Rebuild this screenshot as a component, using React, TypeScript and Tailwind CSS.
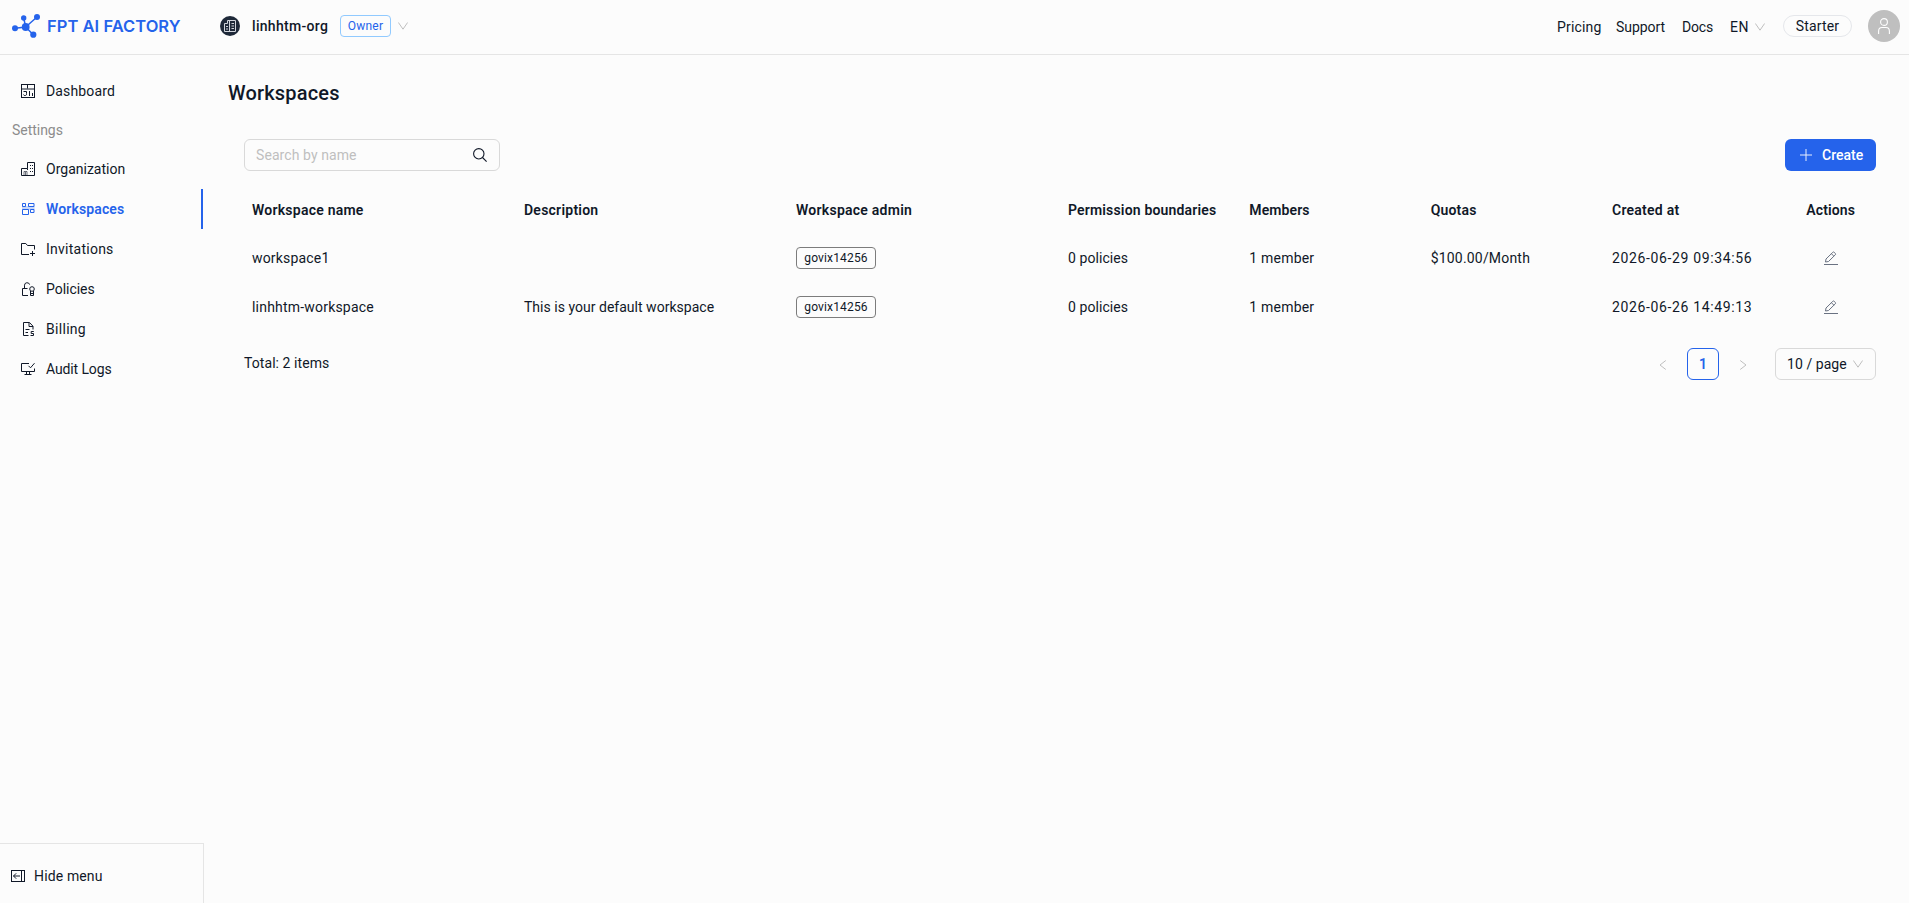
import React from "react";
import type { ReactNode } from "react";

type IconProps = { className?: string; children: ReactNode };

function Icon({ className = "", children }: IconProps) {
  return (
    <svg viewBox="0 0 14 14" fill="none" stroke="currentColor" strokeWidth="1" className={`h-3.5 w-3.5 shrink-0 ${className}`}>
      {children}
    </svg>
  );
}

function BuildingShape() {
  return (
    <>
      <path d="M.5 13.5V6.5H6.5V.5H13.5V13.5Z" />
      <path d="M6.5 6.5V8" />
      <path d="M3 13.5V9.5H6V13.5M4.5 10V13.5" opacity=".6" />
      <path d="M9 3.5h1M11 3.5h1M9 6.5h1M11 6.5h1M9 9.5h1M11 9.5h1" />
    </>
  );
}

const DashboardIcon = () => (
  <Icon>
    <rect x=".5" y=".5" width="13" height="13" />
    <path d="M1 5h12" strokeWidth="2" opacity=".5" />
    <path d="M6.5 1v3.5" />
    <path d="M2.500 7.500H5.500V9.500A1.500 1.500 0 0 1 2.500 10.500M8.500 7v5M11.500 9v3" />
  </Icon>
);

const OrganizationIcon = () => (
  <Icon>
    <BuildingShape />
  </Icon>
);

const WorkspacesIcon = () => (
  <Icon>
    <path d="M1.500 1.500h3v3h-3zM7.500 1.500h5.500v3h-5.500zM1.500 7.500h6v5h-6zM9.500 7.500h3.500v3h-3.500z" />
    <path d="M1 5h12.500M1 7h12.500" strokeWidth="1.200" opacity=".5" />
  </Icon>
);

const InvitationsIcon = () => (
  <Icon>
    <path d="M8 12.500H.5V1.500H4.800L6.500 3.500H13.500V7.500" />
    <path d="M11.500 9v5M9 11.500h5" />
  </Icon>
);

const PoliciesIcon = () => (
  <Icon>
    <path d="M7 13.500H1.500V6.500H6.500" />
    <path d="M3.500 6.500V3.200A2.600 2.600 0 0 1 8.600 2.600" />
    <circle cx="11" cy="7" r="2.300" />
    <path d="M9.500 9v4.500h3V9M9.500 11.500h3" />
  </Icon>
);

const BillingIcon = () => (
  <Icon>
    <path d="M7.500 13.500H2.500V.5H8.500L12 4.200V7.500" />
    <path d="M8 .8V4.500H12M4.500 7.500H8.500M4.500 10.500H7" />
    <path d="M12.800 9.500H10.200V11.500H12.500V13.500H9.500" />
  </Icon>
);

const AuditIcon = () => (
  <Icon>
    <path d="M8 1.500H.5V9.500H13.500V6.500" />
    <path d="M7.500 3.800 9.500 5.800 13.500 1.200" />
    <path d="M5.500 9.500V12.500M8.500 9.500V12.500M3.500 12.500H10.500" />
  </Icon>
);

const HideIcon = () => (
  <svg viewBox="0 0 14 12" fill="none" stroke="currentColor" className="h-3 w-3.5 shrink-0">
    <rect x=".5" y=".5" width="13" height="11" />
    <path d="M10.500 .5V11.500" />
    <path d="M2.500 6H9M5.200 3.300 2.500 6 5.200 8.700" />
  </svg>
);

const EditIcon = () => (
  <svg viewBox="0 0 14 14" fill="none" stroke="currentColor" className="h-3.5 w-3.5 text-gray-500">
    <path d="M0 13.500H14" />
    <path d="M1.500 11 2 8 8.800 1.300Q9.500.6 10.200 1.300L11.300 2.400Q12 3.100 11.300 3.800L4.500 10.500ZM7.500 2.800 9.900 5.200" />
  </svg>
);

const Chevron = () => (
  <svg viewBox="0 0 10 8" fill="none" stroke="currentColor" className="h-2 w-2.5 shrink-0 text-[#bfbfbf]">
    <path d="M.4.5 5 7.200 9.600.5" />
  </svg>
);

function Logo() {
  return (
    <svg viewBox="0 0 28 24" className="h-6 w-7 text-[#2563eb]" fill="currentColor">
      <path d="M3 14.300 13.700 13 11.700 4M13.700 13 25 3M13.700 13 21.300 20.700" fill="none" stroke="currentColor" strokeWidth="1.500" />
      <circle cx="3" cy="14.300" r="3" />
      <circle cx="11.700" cy="4" r="2.700" />
      <circle cx="25" cy="3" r="3" />
      <circle cx="13.700" cy="13" r="3.900" />
      <circle cx="21.300" cy="20.700" r="3.100" />
    </svg>
  );
}

function Header() {
  return (
    <header className="flex h-[55px] shrink-0 items-start justify-between border-b border-[#e5e5e5]">
      <div className="flex">
        <div className="flex h-[52px] w-[220px] items-center pl-3">
          <Logo />
          <span className="mb-px ml-[7px] font-['Inter',sans-serif] text-[16.500px] leading-6 font-semibold tracking-[0.040px] whitespace-nowrap text-[#2563eb]">
            FPT AI FACTORY
          </span>
        </div>
        <div className="flex h-[52px] items-center">
          <div className="flex h-5 w-5 items-center justify-center rounded-full bg-gray-800 text-gray-300">
            <svg viewBox="0 0 12 12" fill="none" stroke="currentColor" className="h-3 w-3">
              <path d="M.5 11.500V3.500H3.500V.5H11.500V11.500ZM5.500 .5V11.500" />
              <path d="M2 6.500H4M2 9H4M7.500 3.500h2.500M7.500 6h2.500M7.500 8.500h2.500" />
            </svg>
          </div>
          <span className="ml-3 w-[77px] font-medium tracking-[0.310px] whitespace-nowrap">linhhtm-org</span>
          <span className="ml-[11px] flex h-[22px] w-[51px] items-center justify-center rounded border border-[#91caff] text-xs tracking-[0.260px] text-[#2563eb]">
            Owner
          </span>
          <span className="ml-[7px]">
            <Chevron />
          </span>
        </div>
      </div>
      <nav className="flex h-[54px] items-center pr-[9px]">
        <span className="w-[59px] tracking-[0.180px]">Pricing</span>
        <span className="w-[66px] tracking-[-0.050px]">Support</span>
        <span className="w-12 tracking-[-0.170px]">Docs</span>
        <span className="w-[25px] tracking-[0.600px]">EN</span>
        <Chevron />
        <span className="mb-0.5 ml-[18px] flex h-[22px] w-[69px] items-center justify-center rounded-full border border-[#e5e7eb] tracking-[0.150px]">
          Starter
        </span>
        <span className="mb-0.5 ml-4 flex h-8 w-8 items-center justify-center rounded-full bg-[#bfbfbf] text-white">
          <svg viewBox="0 0 14 18" fill="none" stroke="currentColor" strokeWidth="1.100" className="h-[18px] w-3.5">
            <circle cx="7" cy="5" r="3.400" />
            <path d="M1.600 17V14.200Q1.600 10.500 5 10.500H9Q12.400 10.500 12.400 14.200V17" />
          </svg>
        </span>
      </nav>
    </header>
  );
}

type MenuItemProps = { icon: ReactNode; label: string; tracking: string; active?: boolean };

function MenuItem({ icon, label, tracking, active = false }: MenuItemProps) {
  return (
    <a
      className={`flex h-10 items-center gap-[11px] pl-[21px] ${tracking} ${
        active ? "border-r-2 border-[#2563eb] font-semibold text-[#2563eb]" : ""
      }`}
    >
      {icon}
      <span>{label}</span>
    </a>
  );
}

function Sidebar() {
  return (
    <aside className="flex w-[204px] shrink-0 flex-col justify-between">
      <nav className="w-[203px] pt-4">
        <MenuItem icon={<DashboardIcon />} label="Dashboard" tracking="tracking-[0.150px]" />
        <div className="flex h-[38px] items-center pl-3 tracking-[-0.030px] text-[#8c8c8c]">Settings</div>
        <MenuItem icon={<OrganizationIcon />} label="Organization" tracking="tracking-[0.010px]" />
        <MenuItem icon={<WorkspacesIcon />} label="Workspaces" tracking="tracking-[0.130px]" active />
        <MenuItem icon={<InvitationsIcon />} label="Invitations" tracking="tracking-[0.250px]" />
        <MenuItem icon={<PoliciesIcon />} label="Policies" tracking="tracking-[-0.030px]" />
        <MenuItem icon={<BillingIcon />} label="Billing" tracking="tracking-[0.300px]" />
        <MenuItem icon={<AuditIcon />} label="Audit Logs" tracking="tracking-[-0.120px]" />
      </nav>
      <div className="flex h-[60px] items-center gap-[9px] border-t border-r border-[#e5e5e5] pt-[5px] pl-[11px] tracking-[0.140px]">
        <HideIcon />
        <span>Hide menu</span>
      </div>
    </aside>
  );
}

const columns = [
  { label: "Workspace name", tracking: "tracking-[0.230px]" },
  { label: "Description", tracking: "tracking-[0.240px]" },
  { label: "Workspace admin", tracking: "tracking-[0.250px]" },
  { label: "Permission boundaries", tracking: "tracking-[0.170px]" },
  { label: "Members", tracking: "tracking-[0.100px]" },
  { label: "Quotas", tracking: "tracking-[0.180px]" },
  { label: "Created at", tracking: "tracking-[0.250px]" },
];

const workspaces = [
  { name: "workspace1", nameTracking: "tracking-[0.180px]", description: "", quota: "$100.00/Month", created: "2026-06-29 09:34:56" },
  { name: "linhhtm-workspace", nameTracking: "tracking-[0.200px]", description: "This is your default workspace", quota: "", created: "2026-06-26 14:49:13" },
];

const rowGrid = "grid grid-cols-[3fr_3fr_3fr_2fr_2fr_2fr_2fr_1fr] items-center whitespace-nowrap";

function WorkspaceTable() {
  return (
    <div className="mt-[15px]">
      <div className={`${rowGrid} h-[47px] font-semibold`}>
        {columns.map((column) => (
          <div key={column.label} className={`min-w-0 pl-2 ${column.tracking}`}>
            {column.label}
          </div>
        ))}
        <div className="min-w-0 text-center tracking-[0.130px]">Actions</div>
      </div>
      {workspaces.map((row) => (
        <div key={row.name} className={`${rowGrid} h-[49px]`}>
          <div className={`min-w-0 pl-2 ${row.nameTracking}`}>{row.name}</div>
          <div className="min-w-0 pl-2 tracking-[0.020px]">{row.description}</div>
          <div className="min-w-0 pl-2">
            <span className="flex h-[22px] w-20 items-center justify-center rounded border border-[#7c7c7c] text-xs tracking-[0.150px]">
              govix14256
            </span>
          </div>
          <div className="min-w-0 pl-2 tracking-[0.070px]">0 policies</div>
          <div className="min-w-0 pl-2 tracking-[0.200px]">1 member</div>
          <div className="min-w-0 pl-2 tracking-[0.190px]">{row.quota}</div>
          <div className="min-w-0 pl-2 tracking-[0.640px]">{row.created}</div>
          <div className="flex justify-center">
            <EditIcon />
          </div>
        </div>
      ))}
    </div>
  );
}

function Pagination() {
  return (
    <div className="mt-[17px] flex items-center justify-between">
      <span className="pb-0.5 tracking-[0.070px]">Total: 2 items</span>
      <div className="flex items-center">
        <svg viewBox="0 0 8 10" fill="none" stroke="currentColor" className="mt-0.5 h-2.5 w-2 text-[#bfbfbf]">
          <path d="M6.800.5 1 5 6.800 9.500" />
        </svg>
        <span className="ml-5 flex h-8 w-8 items-center justify-center rounded-md border border-[#2563eb] font-semibold text-[#2563eb]">1</span>
        <svg viewBox="0 0 8 10" fill="none" stroke="currentColor" className="mt-0.5 ml-5 h-2.5 w-2 text-[#bfbfbf]">
          <path d="M1.200.5 7 5 1.200 9.500" />
        </svg>
        <span className="ml-7 flex h-8 w-[101px] items-center justify-between rounded-md border border-[#d9d9d9] pr-3 pl-[11px] tracking-[0.060px]">
          10 / page
          <Chevron />
        </span>
      </div>
    </div>
  );
}

export default function App() {
  return (
    <div className="flex h-screen flex-col overflow-hidden bg-[#fcfcfc] font-['Roboto',sans-serif] text-sm text-gray-900">
      <Header />
      <div className="flex min-h-0 flex-1">
        <Sidebar />
        <main className="min-w-0 flex-1 pt-6 pr-[33px] pl-6">
          <h1 className="text-xl leading-7 font-medium tracking-[0.180px]">Workspaces</h1>
          <section className="pt-8 pl-4">
            <div className="flex items-center justify-between">
              <div className="flex h-8 w-64 items-center justify-between rounded-md border border-[#d9d9d9] pr-3 pl-[11px]">
                <span className="tracking-[0.080px] text-[#bfbfbf]">Search by name</span>
                <svg viewBox="0 0 14 14" fill="none" stroke="currentColor" strokeWidth="1.100" className="h-3.5 w-3.5">
                  <circle cx="5.800" cy="5.800" r="5.200" />
                  <path d="M9.500 9.500 13.600 13.600" />
                </svg>
              </div>
              <button className="flex h-8 w-[91px] items-center rounded-md bg-[#2563eb] pl-[15px] font-medium text-white">
                <svg viewBox="0 0 12 12" fill="none" stroke="currentColor" className="mr-2.5 h-3 w-3 opacity-90">
                  <path d="M6 0V12M0 6H12" />
                </svg>
                Create
              </button>
            </div>
            <WorkspaceTable />
            <Pagination />
          </section>
        </main>
      </div>
    </div>
  );
}
